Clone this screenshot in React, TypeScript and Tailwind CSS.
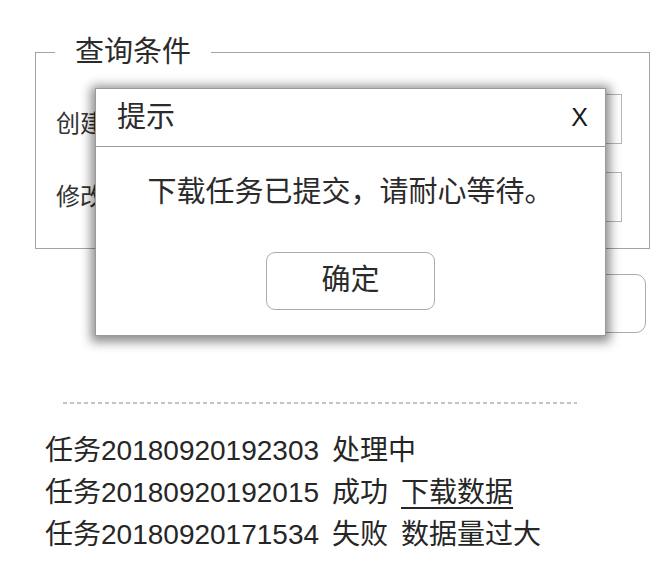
const font = "font-['Liberation_Sans','Noto_Sans_CJK_SC',sans-serif]";

type Task = {
  id: string;
  status: string;
  extra?: string;
  link?: boolean;
};

const tasks: Task[] = [
  { id: "20180920192303", status: "处理中" },
  { id: "20180920192015", status: "成功", extra: "下载数据", link: true },
  { id: "20180920171534", status: "失败", extra: "数据量过大" },
];

function QueryForm() {
  return (
    <fieldset className="ml-[35px] w-[615px] border-[1.5px] border-[#a3a3a3] pt-[22px] pb-[26px]">
      <legend className="ml-[19px] px-[20px] text-[29px] leading-[40px] text-[#2b2b2b]">
        查询条件
      </legend>

      <div className="flex flex-col gap-[28px]">
        <div className="flex items-center">
          <label className="ml-[20px] w-[104px] pt-[10px] text-[24px] text-[#333]">创建时间</label>
          <input className="h-[50px] w-[462px] border-[1.5px] border-[#b5b5b5] bg-white" />
        </div>
        <div className="flex items-center">
          <label className="ml-[20px] w-[104px] text-[24px] text-[#333]">修改时间</label>
          <input className="h-[50px] w-[462px] border-[1.5px] border-[#b5b5b5] bg-white" />
        </div>
      </div>
    </fieldset>
  );
}

function NoticeDialog() {
  return (
    <div className="absolute left-[95px] top-[88px] flex h-[248px] w-[511px] flex-col border-[1.5px] border-[#9a9a9a] bg-white shadow-[0_2px_10px_4px_rgba(0,0,0,0.45)]">
      <div className="flex h-[58px] shrink-0 items-center justify-between border-b-[1.5px] border-[#9a9a9a] pl-[21px] pr-[17px]">
        <span className="text-[29px] text-[#2b2b2b]">提示</span>
        <span className="text-[25px] font-medium text-[#1a1a1a]">X</span>
      </div>
      <div className="flex flex-col items-center pt-[25px]">
        <p className="text-[29px] leading-[40px] text-[#2b2b2b]">下载任务已提交，请耐心等待。</p>
        <button
          type="button"
          className="mt-[40px] h-[58px] w-[169px] rounded-[9px] border-[1.5px] border-[#ababab] bg-white text-[29px] text-[#2b2b2b]"
        >
          确定
        </button>
      </div>
    </div>
  );
}

export default function App() {
  return (
    <div className={`relative h-[566px] w-[672px] overflow-hidden bg-white pt-[32px] ${font}`}>
      <QueryForm />

      <div className="mt-[25px] flex justify-end pr-[26px]">
        <button
          type="button"
          className="h-[59px] w-[150px] rounded-[10px] border-[1.5px] border-[#ababab] bg-white text-[24px] text-[#333]"
        >
          下载
        </button>
      </div>

      <div className="ml-[63px] mt-[69px] h-[2px] w-[514px] bg-[repeating-linear-gradient(90deg,#c4c4c4_0_4px,transparent_4px_7px)]" />

      <ul className="ml-[45px] mt-[26px] text-[28px] leading-[42px] text-[#262626]">
        {tasks.map((t) => (
          <li key={t.id} className="flex gap-[13px]">
            <span>任务{t.id}</span>
            <span>{t.status}</span>
            {t.extra && (
              <span className={t.link ? "underline decoration-[1.5px] underline-offset-[5px]" : ""}>
                {t.extra}
              </span>
            )}
          </li>
        ))}
      </ul>

      <NoticeDialog />
    </div>
  );
}
